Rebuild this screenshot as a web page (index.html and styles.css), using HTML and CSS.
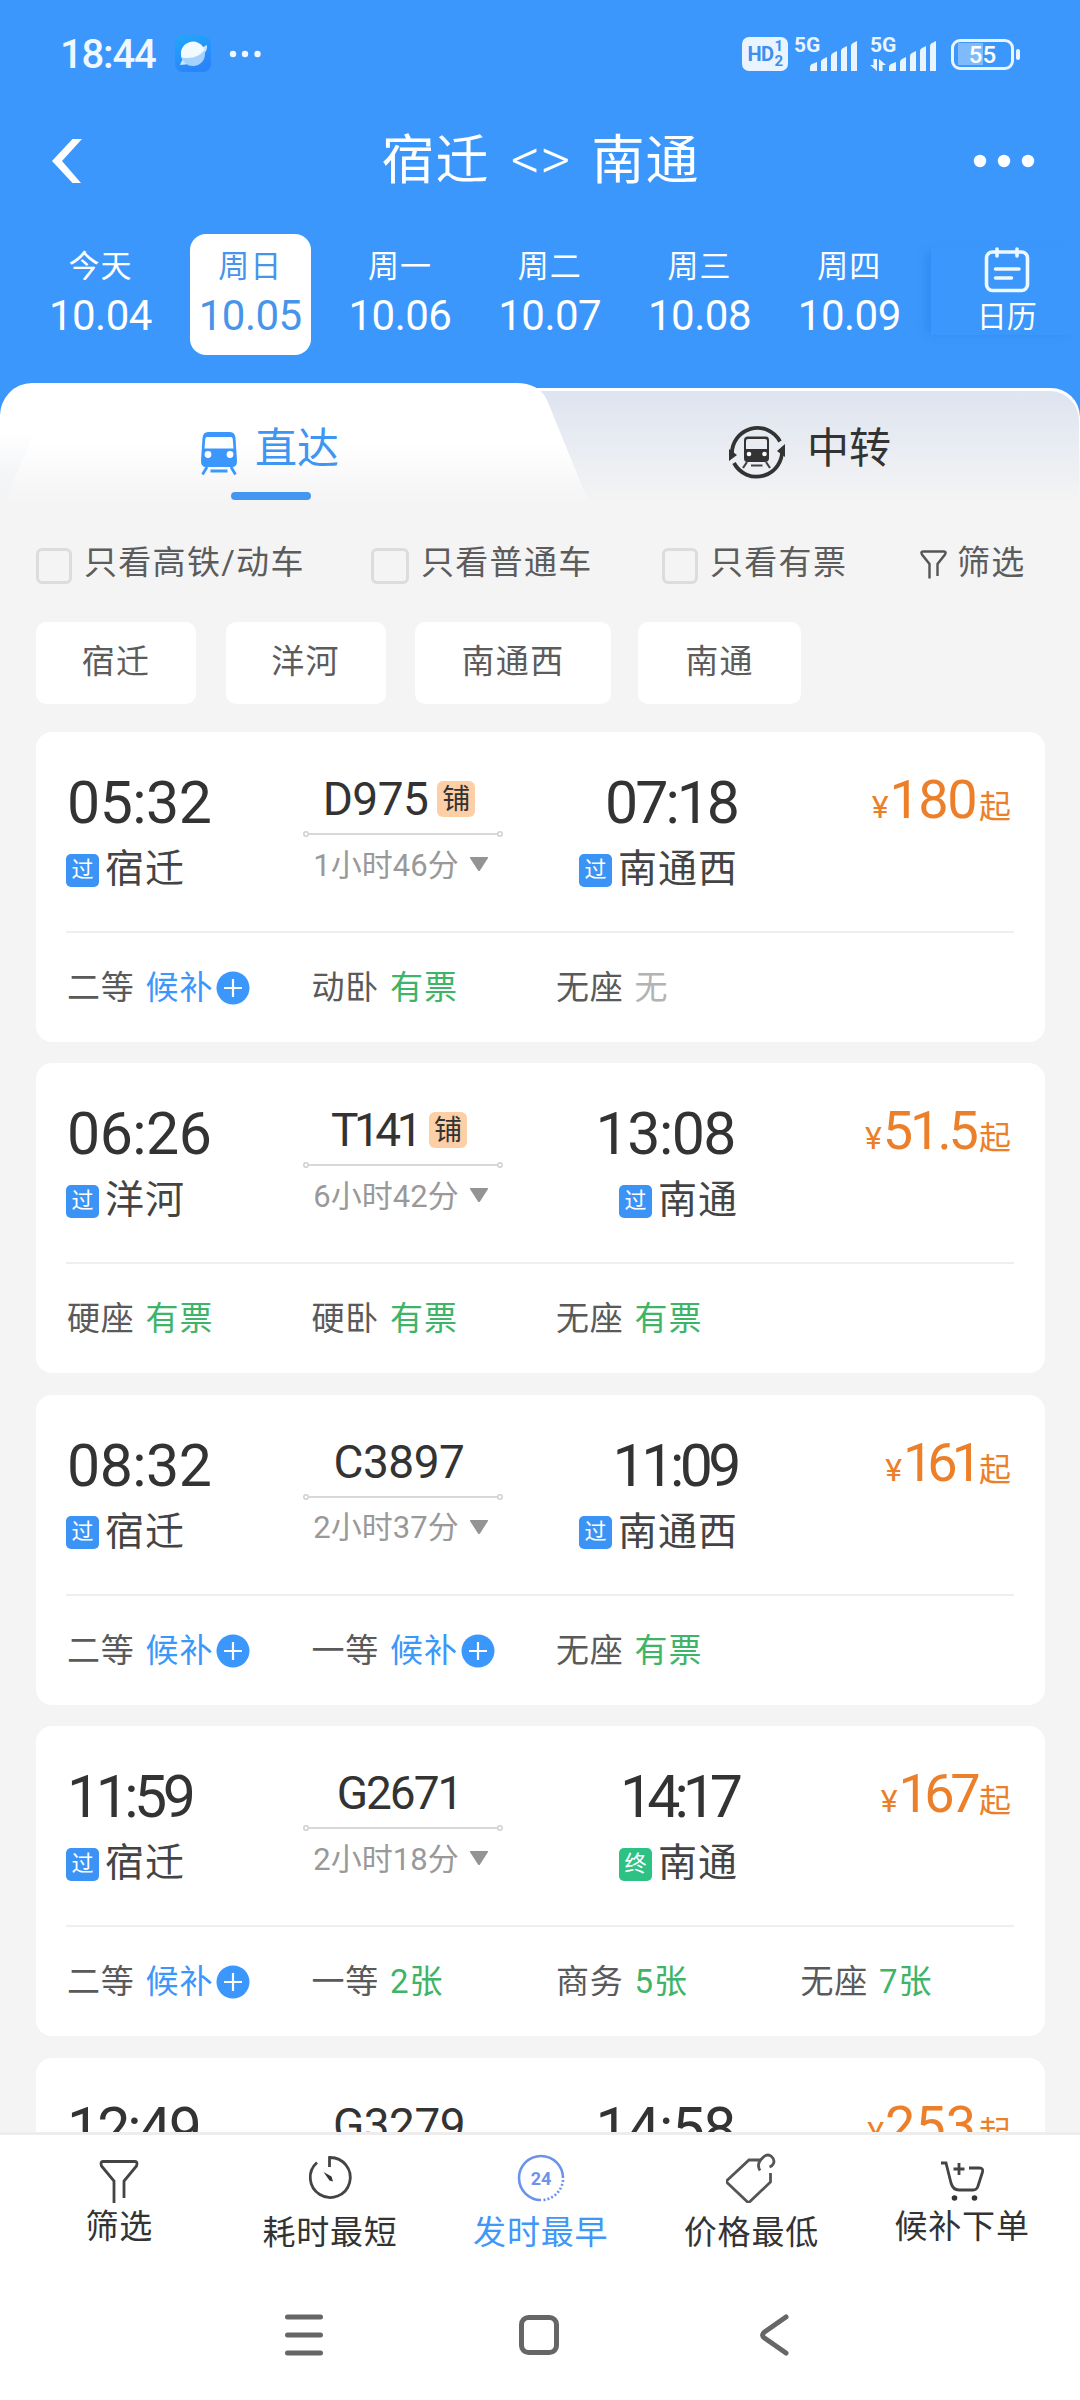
FILE: index.html
```html
<!DOCTYPE html>
<html lang="zh-CN">
<head>
<meta charset="utf-8">
<title>宿迁 - 南通</title>
<link rel="stylesheet" href="styles.css">
</head>
<body>
<svg class="defs" width="0" height="0" aria-hidden="true">
  <symbol id="plus" viewBox="0 0 34 34"><circle cx="17" cy="17" r="16.500" fill="#3b97fb"/><path d="M17 8v18M8 17h18" stroke="#fff" stroke-width="2.200"/></symbol>
  <symbol id="route" viewBox="0 0 200 8"><path d="M6 4h188" stroke="#d8d8d8" stroke-width="2"/><circle cx="3" cy="4" r="2.200" fill="#fff" stroke="#d0d0d0" stroke-width="1.500"/><circle cx="197" cy="4" r="2.200" fill="#fff" stroke="#d0d0d0" stroke-width="1.500"/></symbol>
  <symbol id="down" viewBox="0 0 20 16"><path d="M1.500 1h17q1 0 .5 1l-8 12.500q-1 1-2 0L1 2q-.5-1 .5-1z" fill="#949494"/></symbol>
  <symbol id="bars" viewBox="0 0 48 31"><path d="M0 31v-4q0-2 2-3l5-2v9zM11 31v-9q0-2 2-3l4-2v14zM21 31V16q0-2 2-3l4-2v20zM31 31V11q0-2 2-3l4-2v25zM41 31V6q0-2 2-3l4-2v30z" fill="#eaf4ff"/></symbol>
</svg>
<div class="phone">
  <header class="top">
    <div class="status">
      <span class="clock">18:44</span>
      <svg class="app" viewBox="0 0 36 36"><defs><linearGradient id="ag" x1="0" y1="0" x2=".4" y2="1"><stop offset="0" stop-color="#1fa8fb"/><stop offset="1" stop-color="#2a84fb"/></linearGradient></defs><rect width="36" height="36" rx="8" fill="url(#ag)"/><path d="M5 29Q7 22 14 18L32 9q1 6-6 12Q16 29 5 29z" fill="#c8e6fc"/><circle cx="18" cy="18" r="12" fill="#a5d2fc"/><path d="M6.500 21.500A12 12 0 1 1 29.500 14Q22 24 6.500 21.500z" fill="#f1faff"/></svg>
      <svg class="more-sm" viewBox="0 0 32 8"><g fill="#f2f8ff"><circle cx="4" cy="4" r="3.200"/><circle cx="16" cy="4" r="3.200"/><circle cx="28.500" cy="4" r="3.200"/></g></svg>
      <span class="hd">HD<span class="hd-n"><b>1</b><b>2</b></span></span>
      <span class="sig"><em>5G</em><svg viewBox="0 0 48 31"><use href="#bars"/></svg></span>
      <span class="sig sig2"><em>5G</em><svg class="arrows" viewBox="0 0 16 12"><path d="M7 0v12L0 6h3.500V0zM9 12V0l7 6h-3.500v6z" fill="#eaf4ff"/></svg><svg viewBox="0 0 48 31"><use href="#bars"/></svg></span>
      <span class="batt">55</span>
    </div>
    <div class="title">
      <svg class="back" viewBox="0 0 30 44"><path d="M0 22 20.500 0H30L10 22l19 22h-8.500z" fill="#fff"/></svg>
      <h1><span>宿迁</span><span class="swap">&lt;&gt;</span><span>南通</span></h1>
      <svg class="more" viewBox="0 0 62 14"><g fill="#fff"><circle cx="7" cy="7" r="6.200"/><circle cx="31" cy="7" r="6.200"/><circle cx="55" cy="7" r="6.200"/></g></svg>
    </div>
    <nav class="dates">
      <div class="day"><span>今天</span><b>10.04</b></div>
      <div class="day on"><span>周日</span><b>10.05</b></div>
      <div class="day"><span>周一</span><b>10.06</b></div>
      <div class="day"><span>周二</span><b>10.07</b></div>
      <div class="day"><span>周三</span><b>10.08</b></div>
      <div class="day"><span>周四</span><b>10.09</b></div>
      <div class="cal">
        <svg viewBox="0 0 46 46" fill="none" stroke="#f0f8ff" stroke-width="3.600" stroke-linecap="round"><rect x="2.500" y="5" width="41" height="38.500" rx="6"/><path d="M13 2v7M33 2v7M11.500 22h23.500M11.500 31h16"/></svg>
        <span>日历</span>
      </div>
    </nav>
  </header>

  <div class="tabs">
    <svg class="tabs-bg" viewBox="0 0 1080 120" preserveAspectRatio="none">
      <defs>
        <linearGradient id="g1" x1="0" y1="0" x2="0" y2="1"><stop offset=".06" stop-color="#dfe5f0"/><stop offset=".5" stop-color="#e9ecf2"/><stop offset="1" stop-color="#f4f4f4"/></linearGradient>
        <linearGradient id="g2" x1="0" y1="0" x2="0" y2="1"><stop offset=".5" stop-color="#fff"/><stop offset="1" stop-color="#f4f4f4"/></linearGradient>
        <linearGradient id="g3" x1="0" y1="0" x2="0" y2="1"><stop offset="0" stop-color="#fff"/><stop offset=".6" stop-color="#f3f5f7"/><stop offset="1" stop-color="#f4f4f4"/></linearGradient>
      </defs>
      <rect width="1080" height="60" fill="#3b97fb"/>
      <path d="M500 120V5h551a29 29 0 0 1 29 29v86z" fill="#fff"/>
      <path d="M500 120V8h550a29 29 0 0 1 29 29l1 83z" fill="url(#g1)"/>
      <path d="M0 120V34A32 33 0 0 1 32 0h484q23 0 31 17l42 103z" fill="url(#g2)"/>
      <path d="M0 120V50h34L4 120z" fill="url(#g3)"/>
    </svg>
    <div class="tab on">
      <svg class="train" viewBox="0 0 36 43"><path d="M7 0h22q5 0 5.500 6L36 29q0 6-5 6H5q-5 0-5-6L1.500 6Q2 0 7 0z" fill="#3b97fb"/><path d="M6 5h24q1.500 0 1.700 2l.8 9.500h-29L4.300 7Q4.500 5 6 5z" fill="#fff"/><circle cx="7" cy="22.500" r="3.400" fill="#fff"/><circle cx="29" cy="22.500" r="3.400" fill="#fff"/><path d="M6 35 1.500 42.500M30 35l4.500 7.500M9.500 39h17" stroke="#3b97fb" stroke-width="2.800"/></svg>
      <span>直达</span>
    </div>
    <div class="tab">
      <svg class="loop" viewBox="0 0 56 56"><g fill="none" stroke="#333" stroke-width="3.800"><path d="M3 31A25.500 25.500 0 0 1 51 17.500"/><path d="M53 25A25.500 25.500 0 0 1 5 39"/></g><path d="M0 37V25l8 6zM56 20v13l-8-6z" fill="#333"/><path d="M19 12.500h18q3 0 3 4V34q0 4-4 4H18q-3 0-3-4V16.500q0-4 4-4z" fill="#333"/><path d="M19 15h17q2 0 2 2v8H17v-8q0-2 2-2z" fill="#e9ecf1"/><circle cx="20" cy="30" r="2.300" fill="#fff"/><circle cx="35.500" cy="30" r="2.300" fill="#fff"/><path d="M18 38l-4 6M37 38l4 6M22 41.500h11.500" stroke="#444" stroke-width="2.200"/></svg>
      <span>中转</span>
    </div>
  </div>

  <div class="filters">
    <label class="opt o1"><i class="box"></i>只看高铁/动车</label>
    <label class="opt o2"><i class="box"></i>只看普通车</label>
    <label class="opt o3"><i class="box"></i>只看有票</label>
    <span class="opt o4"><svg viewBox="0 0 27 29" fill="none" stroke="#555" stroke-width="2.400"><path d="M9.500 28.500V14L2 4.500Q.5 1.500 3 1.500h21q2.500 0 1 3L17.500 14v12"/></svg>筛选</span>
  </div>
  <div class="chips"><span>宿迁</span><span>洋河</span><span class="c3">南通西</span><span class="c4">南通</span></div>

  <main class="list">
    <article class="card">
      <div class="trip">
        <div class="dep"><time>05:32</time><p><i class="tag">过</i>宿迁</p></div>
        <div class="mid"><div class="no">D975<i class="bed">铺</i></div><svg class="route"><use href="#route"/></svg><div class="dur">1小时46分<svg><use href="#down"/></svg></div></div>
        <div class="arr"><time class="k2">07:18</time><p><i class="tag">过</i>南通西</p></div>
        <div class="price"><small>¥</small><b class="k1">180</b><small>起</small></div>
      </div>
      <div class="seats"><span>二等<em class="wait">候补</em><svg><use href="#plus"/></svg></span><span>动卧<em>有票</em></span><span>无座<em class="none">无</em></span></div>
    </article>
    <article class="card">
      <div class="trip">
        <div class="dep"><time>06:26</time><p><i class="tag">过</i>洋河</p></div>
        <div class="mid"><div class="no k4">T141<i class="bed">铺</i></div><svg class="route"><use href="#route"/></svg><div class="dur">6小时42分<svg><use href="#down"/></svg></div></div>
        <div class="arr"><time class="k1">13:08</time><p><i class="tag">过</i>南通</p></div>
        <div class="price"><small>¥</small><b class="k2">51.5</b><small>起</small></div>
      </div>
      <div class="seats"><span>硬座<em>有票</em></span><span>硬卧<em>有票</em></span><span>无座<em>有票</em></span></div>
    </article>
    <article class="card">
      <div class="trip">
        <div class="dep"><time>08:32</time><p><i class="tag">过</i>宿迁</p></div>
        <div class="mid"><div class="no">C3897</div><svg class="route"><use href="#route"/></svg><div class="dur">2小时37分<svg><use href="#down"/></svg></div></div>
        <div class="arr"><time class="k3">11:09</time><p><i class="tag">过</i>南通西</p></div>
        <div class="price"><small>¥</small><b class="k5">161</b><small>起</small></div>
      </div>
      <div class="seats"><span>二等<em class="wait">候补</em><svg><use href="#plus"/></svg></span><span>一等<em class="wait">候补</em><svg><use href="#plus"/></svg></span><span>无座<em>有票</em></span></div>
    </article>
    <article class="card">
      <div class="trip">
        <div class="dep"><time class="k3">11:59</time><p><i class="tag">过</i>宿迁</p></div>
        <div class="mid"><div class="no k1">G2671</div><svg class="route"><use href="#route"/></svg><div class="dur">2小时18分<svg><use href="#down"/></svg></div></div>
        <div class="arr"><time class="k4">14:17</time><p><i class="tag end">终</i>南通</p></div>
        <div class="price"><small>¥</small><b class="k3">167</b><small>起</small></div>
      </div>
      <div class="seats"><span>二等<em class="wait">候补</em><svg><use href="#plus"/></svg></span><span>一等<em>2张</em></span><span>商务<em>5张</em></span><span>无座<em>7张</em></span></div>
    </article>
    <article class="card">
      <div class="trip">
        <div class="dep"><time class="k2">12:49</time></div>
        <div class="mid"><div class="no">G3279</div></div>
        <div class="arr"><time class="k1">14:58</time></div>
        <div class="price"><small>¥</small><b>253</b><small>起</small></div>
      </div>
    </article>
  </main>

  <footer class="sort">
    <div class="item up"><svg viewBox="0 0 50 50" fill="none" stroke="#444" stroke-width="2.800"><path d="M20 47V25L7.500 10Q6 5.500 9 5.500h32q3 0 1.500 4.500L30 25v17"/></svg><span>筛选</span></div>
    <div class="item"><svg viewBox="0 0 50 50" fill="none" stroke="#444" stroke-width="2.800"><path d="M12 9.500A20 20 0 1 0 24.500 4.500v9.500"/><path d="M18.500 19l8 4.500 1.500 5-3.500-1z" fill="#333" stroke="none"/></svg><span>耗时最短</span></div>
    <div class="item on"><svg viewBox="0 0 50 50" fill="none" stroke="#6c92ea" stroke-width="2.600"><path d="M25 47A22 22 0 1 1 47 25"/><path d="M47 27A22 22 0 0 1 27 47" stroke-dasharray="2 2"/><text x="25" y="31.500" text-anchor="middle">24</text></svg><span>发时最早</span></div>
    <div class="item"><svg viewBox="0 0 50 50" fill="none" stroke="#555" stroke-width="2.800"><path d="M35 7H23L1.500 27q-1.500 1.500 0 3L21 48.500q1.500 1.500 3 0L44.500 29V20"/><path d="M34 17.500q-3.500-6 1-11l3-3q4-3 7.500 0t2 7q-1 2.500-4 3.500"/></svg><span>价格最低</span></div>
    <div class="item up"><svg viewBox="0 0 50 50" fill="none" stroke="#444" stroke-width="2.800"><path d="M4 7h5l5 20q2 7 8 7h14q4 0 5-4l4.500-14q1-4-3-4H32"/><path d="M22 7v12M16.500 13h11"/><circle cx="17.500" cy="42" r="2.800" fill="#333" stroke="none"/><circle cx="37.500" cy="42" r="2.800" fill="#333" stroke="none"/></svg><span>候补下单</span></div>
  </footer>
  <div class="sysnav">
    <svg viewBox="0 0 50 50"><path d="M8.500 7h33M8.500 25h33M8.500 43h33"/></svg>
    <svg viewBox="0 0 50 50"><rect x="7.500" y="7.500" width="35" height="35" rx="7"/></svg>
    <svg viewBox="0 0 50 50"><path d="M38 7 16.500 22q-4 3 0 6L38 43"/></svg>
  </div>
</div>
</body>
</html>
```
FILE: styles.css
```css
* { box-sizing: border-box; margin: 0; padding: 0; }
body { background: #f4f4f4; }
i, em { font-style: normal; }
b, h1 { font-weight: 400; }
.defs { position: absolute; }
.phone {
  width: 1080px; height: 2400px; overflow: hidden;
  display: flex; flex-direction: column;
  background: #f4f4f4; color: #333;
  font-family: Roboto, "Noto Sans CJK SC", sans-serif;
  font-weight: 400; white-space: nowrap;
}
svg { display: block; flex: none; }

/* header */
.top { height: 383px; background: #3b97fb; color: #fff; flex: none; }
.status { height: 108px; display: flex; align-items: center; padding: 0 66px 0 60px; }
.clock { font-size: 40px; font-weight: 500; width: 115px; letter-spacing: -1.200px; color: #f0f8ff; line-height: 40px; padding-top: 2px; }
.app { width: 36px; height: 36px; }
.more-sm { width: 32px; height: 8px; margin-left: 17.500px; }
.hd {
  margin-left: auto; width: 46px; height: 34px; border-radius: 7px; background: #eaf4ff; color: #3b8ff0;
  display: flex; align-items: center; justify-content: center; font-size: 20px; font-weight: 700; letter-spacing: -.5px;
}
.hd { line-height: 22px; gap: 1px; }
.hd-n { display: flex; flex-direction: column; font-size: 15px; line-height: 15px; }
.hd-n b { font-weight: 700; }
.sig { display: flex; align-items: flex-end; height: 34px; width: 64px; margin-left: 6px; position: relative; justify-content: flex-end; color: #eaf4ff; }
.sig svg { width: 48px; height: 31px; }
.sig em { position: absolute; left: 0; top: 0; font-size: 21px; line-height: 16px; font-weight: 700; }
.sig2 { width: 67px; margin-left: 12px; }
.sig .arrows { width: 16px; height: 12px; margin-right: 3px; }
.batt {
  position: relative; width: 63px; height: 31px; margin-left: 14px; border: 3px solid #eaf4ff; border-radius: 9px;
  font-size: 24px; line-height: 26px; font-weight: 500; text-align: center;
  background: linear-gradient(90deg, transparent 4px, #7fbafc 4px, #7fbafc 29px, transparent 29px);
  background-size: 100% 22px; background-repeat: no-repeat; background-position: 0 1.500px;
}
.batt::after { content: ""; position: absolute; right: -9px; top: 7px; width: 4px; height: 11px; border-radius: 2px; background: #eaf4ff; }
.title { height: 106px; display: flex; align-items: center; justify-content: space-between; padding: 0 45px 0 52px; }
.back { width: 30px; height: 44px; }
.more { width: 62px; height: 14px; }
h1 { display: flex; font-size: 53px; line-height: 60px; letter-spacing: 1px; padding-left: 26px; }
.swap { width: 102px; text-align: center; font-size: 58px; letter-spacing: 0; line-height: 56px; font-weight: 300; }
.dates { display: flex; padding: 20px 0 0 25.500px; }
.day { flex: none; width: 121px; height: 121px; margin: 0 14.400px; border-radius: 16px; text-align: center; padding-top: 13px; }
.day span, .cal span { display: block; font-size: 31px; line-height: 40px; letter-spacing: 1px; }
.day b { display: block; font-size: 42px; line-height: 58px; letter-spacing: -.5px; }
.day.on { background: #fff; color: #4795ea; }
.cal { flex: none; margin-left: 7px; width: 148px; height: 88px; margin-top: 13px; padding-left: 3px; display: flex; flex-direction: column; align-items: center; background: #3b97fb; box-shadow: -8px 2px 10px -4px #2f8af0; position: relative; }
.cal svg { width: 46px; height: 46px; }
.cal span { font-size: 30px; line-height: 48px; letter-spacing: 0; }

/* tabs */
.tabs { position: relative; height: 120px; display: flex; flex: none; }
.tabs-bg { position: absolute; left: 0; top: 0; width: 1080px; height: 120px; }
.tab { position: relative; width: 540px; height: 120px; display: flex; align-items: center; justify-content: center; padding-top: 8px; font-size: 42px; color: #333; }
.tab.on { color: #3f96f2; }
.tab.on::after { content: ""; position: absolute; left: 231px; top: 109px; width: 80px; height: 8px; border-radius: 4px; background: #4497f0; }
.tab span { line-height: 44px; padding-top: 14px; margin-top: -11px; }
.train { width: 36px; height: 43px; margin-right: 18px; margin-top: 22px; margin-bottom: 10px; }
.loop { width: 56px; height: 56px; margin-right: 22px; margin-top: 9px; }

/* filters */
.filters { height: 119px; display: flex; align-items: center; padding: 0 36px; color: #5c5c5c; flex: none; }
.opt { display: flex; align-items: center; font-size: 33px; line-height: 40px; letter-spacing: 1.300px; }
.box { width: 36px; height: 36px; border: 3px solid #dcdcdc; border-radius: 6px; margin: 6px 12px 0 0; }
.o1 { width: 335px; }
.o2 { width: 291px; }
.o2 .box { width: 38px; }
.o3 { width: 258px; }
.opt svg { width: 27px; height: 29px; margin: 4px 10px 0 0; }
.chips { height: 82px; display: flex; padding-left: 36px; flex: none; color: #5c5c5c; font-size: 33px; letter-spacing: 1.300px; }
.chips span { width: 160px; height: 82px; margin-right: 29.500px; border-radius: 10px; background: #fff; text-align: center; line-height: 80px; }
.chips .c3 { width: 196px; margin-right: 27px; }
.chips .c4 { width: 163px; }

/* trains */
.list { flex: none; height: 1428px; padding: 28px 35px 0 36px; display: flex; flex-direction: column; gap: 21.400px; overflow: hidden; }
.card { height: 310px; flex: none; background: #fff; border-radius: 16px; padding: 0 31px 0 30px; }
.trip { height: 201px; border-bottom: 2px solid #efefef; display: grid; grid-template-columns: 237px 200px 233px 1fr; }
time { display: block; font-size: 59px; line-height: 60px; padding-top: 41px; height: 101px; letter-spacing: -.5px; }
.dep time { margin-left: 1px; }
p { display: flex; align-items: center; font-size: 39px; line-height: 50px; margin-top: 11px; letter-spacing: 1px; color: #444; }
.arr { text-align: right; }
.arr time { padding-right: 1px; }
.arr p { justify-content: flex-end; margin-right: -2px; }
.tag { width: 33px; height: 33px; border-radius: 5px; background: #3b93f5; color: #fff; font-size: 22px; line-height: 32px; text-align: center; margin: 2px 6px 0 0; letter-spacing: 0; }
.tag.end { background: #2ec184; }
.k1 { letter-spacing: -1.500px; }
.k2 { letter-spacing: -3px; }
.k3 { letter-spacing: -4.500px; }
.k4, .k5 { letter-spacing: -6px; }
.arr .k2, .arr .k3, .arr .k4 { padding-right: 0; margin-right: -1px; }
.mid { display: flex; flex-direction: column; align-items: center; }
.no { display: flex; align-items: center; height: 50px; margin-top: 42px; font-size: 46px; line-height: 50px; padding-right: 8px; letter-spacing: -.5px; }
.no.k1 { letter-spacing: -2px; }
.no.k4 { letter-spacing: -4.500px; }
.bed { width: 38px; height: 36px; margin-left: 9px; border-radius: 6px; background: #fccfa6; font-size: 28px; line-height: 37px; text-align: center; letter-spacing: 0; }
.k4 .bed { margin-left: 11px; }
.route { width: 200px; height: 8px; margin-top: 6px; }
.dur { display: flex; align-items: center; height: 40px; margin-top: 4px; padding-right: 4px; font-size: 31px; color: #999; }
.dur svg { width: 20px; height: 16px; margin: 4px 0 0 10px; }
.price { display: flex; justify-content: flex-end; align-items: baseline; color: #ec7f29; line-height: 60px; padding: 38px 3px 0 0; }
.price b { font-size: 54px; margin: 0 3px 0 1px; }
.price small { font-size: 32px; }
.seats { height: 109px; display: grid; grid-template-columns: repeat(4, 244.500px); align-items: center; font-size: 33px; line-height: 40px; color: #5a5a5a; padding: 1px 0 0 1px; letter-spacing: .8px; }
.seats span { display: flex; align-items: center; }
.seats em { color: #3eb468; margin-left: 11px; }
.seats .wait { color: #3b97fb; }
.seats .none { color: #b3b3b3; }
.seats svg { width: 34px; height: 34px; margin-left: 3px; }

/* bottom bars */
.sort { height: 128px; flex: none; background: #fff; border-top: 3px solid #ededed; display: flex; padding-left: 14px; color: #333; }
.item { width: 210.700px; display: flex; flex-direction: column; align-items: center; padding-top: 18px; font-size: 33px; letter-spacing: .8px; }
.item svg { width: 50px; height: 50px; }
.item span { line-height: 40px; margin-top: 10px; }
.item.up svg { margin-top: 3px; }
.item.up span { margin-top: 1px; }
.item.on { color: #3f97f7; }
.item text { font: 700 18px Roboto, sans-serif; fill: #6c92ea; stroke: none; letter-spacing: 0; }
.sysnav { flex: none; height: 140px; background: #fff; display: flex; justify-content: center; gap: 184.500px; padding: 50px 3px 0 0; }
.sysnav svg { width: 50px; height: 50px; fill: none; stroke: #666; stroke-width: 5; stroke-linecap: round; stroke-linejoin: round; }
```
